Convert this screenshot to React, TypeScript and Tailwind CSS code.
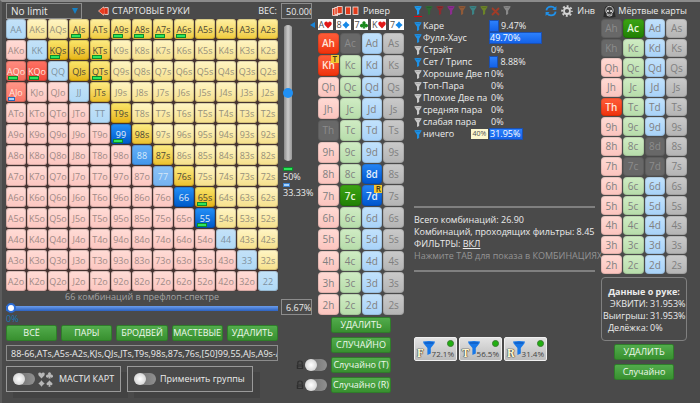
import { useState, type ReactNode } from 'react'
import clsx from 'clsx'

const RANKS = ['A', 'K', 'Q', 'J', 'T', '9', '8', '7', '6', '5', '4', '3', '2']
const SUITS = ['h', 'c', 'd', 's'] as const

type Suit = (typeof SUITS)[number]
type Tone = 'soft' | 'strong' | 'full'

const HAND_TONES: Record<string, Tone> = {
  AJs: 'soft', ATs: 'soft', A9s: 'soft', A8s: 'soft', A7s: 'soft', A6s: 'soft',
  A5s: 'soft', A4s: 'soft', A3s: 'soft', A2s: 'soft',
  KQs: 'full', KJs: 'full', KTs: 'strong', QJs: 'full', QTs: 'strong', JTs: 'strong',
  T9s: 'full', '98s': 'strong', '87s': 'strong', '76s': 'strong', '65s': 'full',
  '99': 'full', '88': 'strong', '77': 'soft', '66': 'full', '55': 'full',
  AQo: 'strong', KQo: 'full', AJo: 'soft',
}

const HALF_WEIGHT = ['AJs', 'A9s', 'A8s', 'A7s', 'A6s', 'KQs', 'KTs', 'QTs', '65s', '99', '55', 'AQo', 'KQo']
const THIRD_WEIGHT = ['AJo']

const SUITED_STYLES = {
  none: 'from-[#fff5c4] to-[#f6e08c] text-[#96907a]',
  soft: 'from-[#fff0a0] to-[#f0cb38] text-[#4c4836]',
  strong: 'from-[#fdec82] to-[#ecc028] text-[#4c4836]',
  full: 'from-[#fbe668] to-[#e6b40a] text-[#4c4836]',
}
const PAIR_STYLES = {
  none: 'from-[#c4e2f8] to-[#b0d9f6] text-[#7e92a0]',
  soft: 'from-[#8cc2f6] to-[#74b2f0] text-[#d6e8f8]',
  strong: 'from-[#66b0f6] to-[#4296ea] text-[#d8eafa]',
  full: 'from-[#2490f8] to-[#0058c8] text-[#e4f0fa]',
}
const OFFSUIT_STYLES = {
  none: 'from-[#ffdcd6] to-[#fcc6c0] text-[#9e8a86]',
  soft: 'from-[#ff9688] to-[#f87466] text-[#ffe4de]',
  strong: 'from-[#ff8c80] to-[#f4685a] text-[#ffe4de]',
  full: 'from-[#ff7264] to-[#f0483a] text-[#ffe4de]',
}

const CARD_STYLES: Record<Suit, { idle: string; picked: string }> = {
  h: { idle: 'from-[#ffdad4] to-[#fbc4be]', picked: 'from-[#ff5c38] to-[#ee3006] text-[#ffe6da]' },
  c: { idle: 'from-[#d0ecc4] to-[#b6dcaa]', picked: 'from-[#3ca414] to-[#208004] text-[#e6f6dc]' },
  d: { idle: 'from-[#c2e2fc] to-[#a8d2f8]', picked: 'from-[#2484f4] to-[#0054cc] text-[#e4f0fc]' },
  s: { idle: 'from-[#cacaca] to-[#b4b4b4]', picked: 'from-[#666] to-[#222] text-white' },
}

const SUIT_PATHS: Record<Suit, string> = {
  h: 'M5 9.4 L0.9 4.9 Q-0.3 2.6 1.2 1.2 Q3.4 -0.2 5 2.2 Q6.6 -0.2 8.8 1.2 Q10.3 2.6 9.1 4.9 Z',
  c: 'M5 0.4 A2.2 2.2 0 0 1 6.6 4 A2.2 2.2 0 1 1 5.7 6.6 L6.6 9.4 H3.4 L4.3 6.6 A2.2 2.2 0 1 1 3.4 4 A2.2 2.2 0 0 1 5 0.4 Z',
  d: 'M5 0.3 Q6.6 3.2 9.5 5 Q6.6 6.8 5 9.7 Q3.4 6.8 0.5 5 Q3.4 3.2 5 0.3 Z',
  s: 'M5 0.3 Q6 2 8.4 4 Q10.2 5.8 8.4 7.2 Q6.8 8.2 5.6 6.8 L6.6 9.6 H3.4 L4.4 6.8 Q3.2 8.2 1.6 7.2 Q-0.2 5.8 1.6 4 Q4 2 5 0.3 Z',
}

const FILTERS = [
  { name: 'Каре', value: 9.47, active: true },
  { name: 'Фулл-Хаус', value: 49.7, active: true },
  { name: 'Стрэйт', value: 0, active: false },
  { name: 'Сет / Трипс', value: 8.88, active: true },
  { name: 'Хорошие Две п', value: 0, active: false },
  { name: 'Топ-Пара', value: 0, active: false },
  { name: 'Плохие Две па', value: 0, active: false },
  { name: 'средняя пара', value: 0, active: false },
  { name: 'слабая пара', value: 0, active: false },
  { name: 'ничего', value: 31.95, active: true, note: '40%' },
]

const BOARD: { rank: string; suit: Suit; color: string }[] = [
  { rank: 'A', suit: 'h', color: 'text-[#e01818]' },
  { rank: '8', suit: 'd', color: 'text-[#1488e8]' },
  { rank: '7', suit: 'c', color: 'text-[#18881c]' },
  { rank: 'K', suit: 'h', color: 'text-[#e01818]' },
  { rank: '7', suit: 'd', color: 'text-[#1488e8]' },
]

function SuitIcon({ suit, className }: { suit: Suit; className?: string }) {
  return (
    <svg viewBox="0 0 10 10" className={clsx('shrink-0', className)} fill="currentColor" aria-hidden="true">
      <path d={SUIT_PATHS[suit]} />
    </svg>
  )
}

function Funnel({ className }: { className?: string }) {
  return (
    <svg viewBox="0 0 8 10" className={clsx('shrink-0', className)} fill="currentColor" aria-hidden="true">
      <path d="M0 0.4 Q4 -0.4 8 0.4 L7.6 1.8 L5.3 5.4 V9 L2.9 10 V5.4 L0.4 1.8 Z" />
      <path d="M1.2 1.1 H6.8 L6.3 1.9 H1.7 Z" fill="#000" opacity="0.18" />
    </svg>
  )
}

function GreenButton({ children, className }: { children: ReactNode; className?: string }) {
  return (
    <button
      className={clsx(
        'flex h-4 items-center justify-center whitespace-nowrap rounded-xs border border-[#2f7d2a] bg-linear-to-b from-[#52ac4c] to-[#38902f] text-[9px] font-medium text-[#eef8ec]',
        className,
      )}
    >
      {children}
    </button>
  )
}

function Toggle({ label }: { label: string }) {
  return (
    <input
      type="checkbox"
      role="switch"
      aria-label={label}
      className="h-3 w-[22px] shrink-0 appearance-none rounded-full bg-linear-to-r from-[#6a6a6a] to-[#909090] before:block before:size-3 before:rounded-full before:bg-radial before:from-white before:to-[#c8c8c8] checked:before:translate-x-2.5"
    />
  )
}

function HandMatrix() {
  return (
    <div className="grid grid-cols-13 gap-px bg-[#443230]">
      {RANKS.map((row, r) =>
        RANKS.map((col, c) => {
          const hand = r === c ? row + col : r < c ? `${row}${col}s` : `${col}${row}o`
          const styles = r === c ? PAIR_STYLES : r < c ? SUITED_STYLES : OFFSUIT_STYLES
          return (
            <button
              key={hand}
              className={clsx(
                'relative flex h-5 items-center justify-center rounded-[3px] bg-linear-to-b text-[9px] leading-none inset-ring inset-ring-black/15',
                styles[HAND_TONES[hand] ?? 'none'],
                HAND_TONES[hand] && 'font-medium',
              )}
            >
              {hand}
              {HALF_WEIGHT.includes(hand) && (
                <span className="absolute bottom-px left-0.5 h-1 w-2.5 border border-[#0e8a2c] bg-[#2ee65c]" />
              )}
              {THIRD_WEIGHT.includes(hand) && (
                <span className="absolute bottom-px left-0.5 h-1 w-[7px] border border-[#2868b8] bg-[#a8d4fc]" />
              )}
            </button>
          )
        }),
      )}
    </div>
  )
}

interface CardGridProps {
  picked: string[]
  disabled: string[]
  badges?: Record<string, string>
  className?: string
}

function CardGrid({ picked, disabled, badges = {}, className }: CardGridProps) {
  return (
    <div className={clsx('grid grid-cols-4 grid-rows-13 gap-px', className)}>
      {RANKS.map((rank) =>
        SUITS.map((suit) => {
          const card = rank + suit
          const isPicked = picked.includes(card)
          const isDisabled = disabled.includes(card)
          return (
            <button
              key={card}
              aria-pressed={isPicked}
              disabled={isDisabled}
              className={clsx(
                'relative flex items-center justify-center rounded-[4px] text-[10px] leading-none inset-ring inset-ring-black/10',
                isDisabled && 'bg-[#686868] text-[#8c8c8c]',
                !isDisabled && 'bg-linear-to-b',
                !isDisabled && (isPicked ? CARD_STYLES[suit].picked : CARD_STYLES[suit].idle),
                !isDisabled && (isPicked ? 'font-semibold' : 'text-[#808080]'),
              )}
            >
              {card}
              {badges[card] && (
                <span className="absolute top-0 right-0 flex size-2 items-center justify-center bg-[#f4c830] text-[8px] font-semibold text-[#40361a]">
                  {badges[card]}
                </span>
              )}
            </button>
          )
        }),
      )}
    </div>
  )
}

function RangePanel() {
  const [weight, setWeight] = useState(50)
  const [limit, setLimit] = useState(0)

  return (
    <section className="flex flex-col">
      <div className="flex h-4 items-center">
        <div className="relative flex">
          <select
            aria-label="No limit"
            className="h-4 w-[76px] appearance-none border border-[#8c8c8c] pl-1 text-[10px] leading-[14px]"
          >
            <option>No limit</option>
          </select>
          <svg viewBox="0 0 6 6" className="pointer-events-none absolute top-[5px] right-1 size-1.5" fill="#1780c4">
            <path d="M0 0 H6 L3 6 Z" />
          </svg>
        </div>
        <svg viewBox="0 0 11 10" className="ml-4 h-2.5 w-[11px]">
          <path d="M0.5 5 L5.5 0.8 V2 H7 V8 H5.5 V9.2 Z" fill="#e83c20" stroke="#ffd0c0" strokeWidth="0.7" />
          <path d="M6.6 1.6 H10.2 V8.4 H6.6" fill="#d83018" stroke="#f4f4f4" strokeWidth="0.8" />
        </svg>
        <h1 className="ml-[3px] text-[9px] whitespace-nowrap">СТАРТОВЫЕ РУКИ</h1>
        <label htmlFor="weight" className="mr-1 ml-auto text-[9px]">ВЕС:</label>
        <input
          id="weight"
          defaultValue="50.000"
          className="h-4 w-[31px] border border-[#8c8c8c] pl-1 text-[9px]"
        />
      </div>

      <div className="flex">
        <div className="flex min-w-0 flex-1 flex-col">
          <HandMatrix />
          <p className="h-3 text-center text-[9px] leading-3 text-[#a4a4a4]">66 комбинаций в префлоп-спектре</p>
          <input
            type="range"
            aria-label="Процент рук"
            value={limit}
            onChange={(e) => setLimit(Number(e.target.value))}
            className="h-2.5 appearance-none bg-[linear-gradient(#6a9cec,#2c62c0)] bg-size-[100%_5px] bg-center bg-no-repeat [&::-webkit-slider-thumb]:size-2.5 [&::-webkit-slider-thumb]:appearance-none [&::-webkit-slider-thumb]:rounded-full [&::-webkit-slider-thumb]:border-2 [&::-webkit-slider-thumb]:border-[#2c6cd4] [&::-webkit-slider-thumb]:bg-white"
          />
          <p className="text-[9px] leading-3 text-[#1878b4]">0%</p>
        </div>

        <div className="flex w-[34px] shrink-0 flex-col pl-[3px]">
          <input
            type="range"
            aria-label="Вес руки"
            value={weight}
            onChange={(e) => setWeight(Number(e.target.value))}
            className="mt-1.5 ml-0.5 h-[136px] w-2.5 appearance-none rounded-full bg-[linear-gradient(to_right,#8c8c8c,#cacaca,#989898)] bg-size-[8px_100%] bg-center bg-no-repeat [direction:rtl] [writing-mode:vertical-lr] [&::-webkit-slider-thumb]:size-2.5 [&::-webkit-slider-thumb]:appearance-none [&::-webkit-slider-thumb]:rounded-full [&::-webkit-slider-thumb]:bg-[#2090f4]"
          />
          <span className="mt-1.5 ml-0.5 h-1 w-2.5 border border-[#0e8a2c] bg-[#2ee65c]" />
          <span className="ml-0.5 h-3 text-[9px] leading-3">50%</span>
          <span className="ml-0.5 h-1 w-[7px] border border-[#3c80cc] bg-[#a8d4fc]" />
          <span className="ml-0.5 text-[9px] leading-3">33.33%</span>
          <input
            aria-label="Процент спектра"
            defaultValue="6.67%"
            className="mt-auto mb-2.5 h-4 w-[31px] border border-[#8c8c8c] pl-1 text-[9px]"
          />
        </div>
      </div>

      <div className="pr-[34px]">
        <div className="grid grid-cols-5 gap-1">
          {['ВСЁ', 'ПАРЫ', 'БРОДВЕЙ', 'МАСТЕВЫЕ', 'УДАЛИТЬ'].map((label) => (
            <GreenButton key={label}>{label}</GreenButton>
          ))}
        </div>
        <input
          aria-label="Спектр"
          defaultValue="88-66,ATs,A5s-A2s,KJs,QJs,JTs,T9s,98s,87s,76s,[50]99,55,AJs,A9s-A6s"
          className="mt-1 block h-4 w-full border border-[#8c8c8c] pl-1 text-[9px] font-medium"
        />
        <div className="mt-[5px] flex gap-1.5">
          <label className="flex h-[26px] w-[115px] items-center border border-[#9a9a9a] bg-[#4a4a4a] pl-1.5 shadow-[7px_6px_0_#434343]">
            <Toggle label="МАСТИ КАРТ" />
            <span className="ml-[3px] grid grid-cols-2 gap-px text-[#b8b8b8]">
              <SuitIcon suit="h" className="size-[7px]" />
              <SuitIcon suit="c" className="size-[7px]" />
              <SuitIcon suit="d" className="size-[7px]" />
              <SuitIcon suit="s" className="size-[7px]" />
            </span>
            <span className="ml-1.5 text-[9px] whitespace-nowrap">МАСТИ КАРТ</span>
          </label>
          <label className="flex h-[26px] w-[126px] items-center border border-[#9a9a9a] bg-[#4a4a4a] pl-1.5 shadow-[7px_6px_0_#434343]">
            <Toggle label="Применить группы" />
            <span className="ml-1 text-[9px] whitespace-nowrap">Применить группы</span>
          </label>
        </div>
      </div>
    </section>
  )
}

function Lock() {
  return (
    <svg viewBox="0 0 8 10" className="mr-px h-2.5 w-2" aria-hidden="true">
      <path d="M1.8 4.6 V3 Q1.8 1 4 1 Q6.2 1 6.2 3 V4.6" fill="none" stroke="#2e2e2e" strokeWidth="1.2" />
      <rect x="0.8" y="4.6" width="6.4" height="4.4" rx="0.6" fill="#2e2e2e" />
      <path d="M2.2 6 H5.8 M2.2 7.5 H5.8" stroke="#5a5a5a" strokeWidth="0.7" />
    </svg>
  )
}

function BoardPanel() {
  return (
    <section className="flex flex-col">
      <div className="flex h-4 items-center justify-center gap-1">
        <svg viewBox="0 0 27 10" className="h-2.5 w-[27px]" stroke="#f8e8e4" strokeWidth="0.8" fill="#e43c1c">
          <rect x="0.6" y="2.4" width="5" height="7" />
          <rect x="2.9" y="1.4" width="5" height="7" />
          <rect x="5.2" y="0.6" width="5" height="7" />
          <rect x="13.6" y="1" width="5" height="7.4" />
          <rect x="21" y="1" width="5" height="7.4" />
        </svg>
        <h2 className="text-[9px]">Ривер</h2>
      </div>
      <div className="relative flex gap-[3px]">
        <svg viewBox="0 0 5 6" className="absolute top-[3px] -left-2 h-1.5 w-[5px]" fill="#1884d8">
          <path d="M5 0 V6 L0 3 Z" />
        </svg>
        {BOARD.map(({ rank, suit, color }) => (
          <span
            key={rank + suit}
            className="flex h-[11px] flex-1 items-center justify-center bg-white text-[9px] leading-none text-[#505050]"
          >
            {rank}
            <SuitIcon suit={suit} className={clsx('size-2', color)} />
          </span>
        ))}
      </div>
      <CardGrid
        className="mt-[3px] h-[282px]"
        picked={['Ah', 'Kh', '8d', '7c', '7d']}
        disabled={['Ac', 'Th']}
        badges={{ Kh: 'T', '7d': 'R' }}
      />
      <div className="mt-0.5 flex flex-col gap-1 pr-[13px]">
        <GreenButton className="ml-[13px]">УДАЛИТЬ</GreenButton>
        <GreenButton className="ml-[13px]">СЛУЧАЙНО</GreenButton>
        {['Случайно (T)', 'Случайно (R)'].map((label) => (
          <div key={label} className="-ml-[22px] flex items-center">
            <Lock />
            <Toggle label={label} />
            <GreenButton className="ml-1 min-w-0 flex-1">{label}</GreenButton>
          </div>
        ))}
      </div>
    </section>
  )
}

const PALETTE = [
  'text-[#1e9cf0]', 'text-[#2f6a34]', 'text-[#8c2c30]', 'text-[#8c2c90]',
  'text-[#905a38]', 'text-[#3c8486]', 'text-[#6c8428]',
]

function FilterPanel() {
  return (
    <section className="flex flex-col pl-1">
      <div className="flex h-4 items-center justify-between">
        <div className="flex gap-[3px]">
          {PALETTE.map((color, i) => (
            <button
              key={color}
              aria-label={`Группа ${i + 1}`}
              className={clsx('h-3 border-b', i === 0 ? 'border-red-600' : 'border-transparent')}
            >
              <Funnel className={clsx('h-[9px] w-2', color)} />
            </button>
          ))}
          <button aria-label="Сбросить" className="h-3">
            <svg viewBox="0 0 9 9" className="size-[9px]" stroke="#a03c28" strokeWidth="1.8">
              <path d="M1 1 L8 8 M8 1 L1 8" />
            </svg>
          </button>
          <button aria-label="Без группы" className="h-3 border-b border-transparent">
            <Funnel className="h-[9px] w-2 text-[#8a8a8a]" />
          </button>
        </div>
        <div className="flex items-center gap-1">
          <button aria-label="Обновить">
            <svg viewBox="0 0 12 12" className="size-3" fill="none" stroke="#2090e8" strokeWidth="1.8">
              <path d="M1.4 5.4 Q2 1.6 6 1.6 Q8.4 1.6 9.8 3.4" />
              <path d="M10.6 6.6 Q10 10.4 6 10.4 Q3.6 10.4 2.2 8.6" />
              <path d="M11.4 1 V5 H7.4 Z M0.6 11 V7 H4.6 Z" fill="#2090e8" stroke="none" />
            </svg>
          </button>
          <button aria-label="Настройки">
            <svg viewBox="0 0 12 12" className="size-3" fill="none" stroke="#d4d4d4">
              <circle cx="6" cy="6" r="3" strokeWidth="1.8" />
              <circle cx="6" cy="6" r="4.9" strokeWidth="1.8" strokeDasharray="1.95 1.9" strokeDashoffset="0.97" />
            </svg>
          </button>
          <button className="text-[9px] font-medium">Инв</button>
        </div>
      </div>

      <ul className="mt-px text-[9px] leading-3">
        {FILTERS.map(({ name, value, active, note }) => (
          <li key={name} className="relative flex h-3 items-center">
            <Funnel className={clsx('h-[9px] w-2', active ? 'text-[#1e90e4]' : 'text-[#c8c8c8]')} />
            <span className="w-[67px] shrink-0 overflow-hidden pl-px whitespace-nowrap">{name}</span>
            {note && (
              <span className="absolute left-[57px] flex h-2.5 w-[17px] items-center justify-center bg-[#fdf8d0] text-[7px] text-[#505050]">
                {note}
              </span>
            )}
            <div className="flex min-w-0 flex-1 items-center">
              {value > 30 ? (
                <span
                  className="h-3 border border-[#1c50b0] bg-linear-to-b from-[#2c80fc] to-[#1462e8] leading-[10px] text-white"
                  style={{ width: `${value}%` }}
                >
                  {value.toFixed(2)}%
                </span>
              ) : (
                <>
                  <span
                    className={clsx('h-3 bg-linear-to-b from-[#2c80fc] to-[#1462e8]', value > 0 && 'border border-[#1c50b0]')}
                    style={{ width: `${value}%` }}
                  />
                  <span className="pl-0.5">{value ? value.toFixed(2) : 0}%</span>
                </>
              )}
            </div>
          </li>
        ))}
      </ul>

      <div className="mt-[66px] border-y-2 border-[#808080] pt-1.5 pb-2 text-[9px] leading-3 whitespace-nowrap">
        <p>Всего комбинаций: 26.90</p>
        <p>Комбинаций, проходящих фильтры: 8.45</p>
        <p>
          ФИЛЬТРЫ: <button className="underline">ВКЛ</button>
        </p>
        <p className="text-[#949494]">Нажмите ТАВ для показа в КОМБИНАЦИЯХ</p>
      </div>

      <div className="mt-[65px] flex gap-0.5">
        {[
          ['F', '72.1%'],
          ['T', '56.5%'],
          ['R', '31.4%'],
        ].map(([street, share]) => (
          <button
            key={street}
            className="relative flex h-6 w-[43px] items-end rounded-xs border border-[#f0f0f0] bg-linear-to-b from-[#e2e2e2] to-[#bcbcbc] pl-0.5 text-[#444]"
          >
            <span className="font-serif text-[12px] leading-[14px] font-bold text-[#fff8d0] [text-shadow:0_0_1px_#333,0_0_1px_#333,0_0_1px_#333]">
              {street}
            </span>
            <svg viewBox="0 0 12 14" className="absolute top-[3px] left-2 h-3.5 w-3" fill="#1878e8">
              <path d="M0 0.6 Q6 -0.4 12 0.6 L11.4 2.4 L7.8 7 V12.4 L4.4 14 V7 L0.6 2.4 Z" />
              <path d="M1.6 1.4 H10.4 L9.8 2.4 H2.2 Z" fill="#0c50b0" />
            </svg>
            <span className="absolute top-0.5 right-0.5 size-[7px] rounded-full border border-[#3c7c34] bg-[#20b010]" />
            <span className="absolute right-0.5 bottom-0.5 text-[8px] leading-[9px]">{share}</span>
          </button>
        ))}
      </div>
    </section>
  )
}

function DeadCardsPanel() {
  return (
    <section className="flex flex-col">
      <div className="flex h-4 items-center justify-between">
        <svg viewBox="0 0 13 13" className="ml-0.5 size-[13px]">
          <path d="M6.5 0.4 Q12 0.6 11.6 6 L12.6 12 Q6.5 13.6 0.4 12 L1.4 6 Q1 0.6 6.5 0.4 Z" fill="#2a2a2a" />
          <path d="M6.5 1.4 Q10.4 1.6 10.2 5.8 L9.4 8 L8.8 8.4 V10.4 Q6.5 11.6 4.2 10.4 V8.4 L3.6 8 L2.8 5.8 Q2.6 1.6 6.5 1.4 Z" fill="#3c3c3c" stroke="#d8d8d8" strokeWidth="0.9" />
          <circle cx="4.9" cy="6" r="1.1" fill="#e4e4e4" />
          <circle cx="8.1" cy="6" r="1.1" fill="#e4e4e4" />
          <path d="M5 9.4 H8" stroke="#d0d0d0" strokeWidth="0.9" strokeDasharray="0.8 0.4" />
        </svg>
        <h2 className="text-[9px] font-medium whitespace-nowrap">Мёртвые карты</h2>
      </div>
      <CardGrid
        className="h-[255px]"
        picked={['Ac', 'Th']}
        disabled={['Ah', 'Kh', '8d', '7c', '7d']}
      />
      <div className="mt-[3px] rounded-sm border border-[#808080] pt-2 pb-1.5 text-[9px] leading-3 whitespace-nowrap">
        <h3 className="text-center font-bold">Данные о руке:</h3>
        <dl className="grid grid-cols-[46px_1fr] gap-x-0.5">
          <dt className="text-right">ЭКВИТИ:</dt>
          <dd>31.953%</dd>
          <dt className="text-right">Выигрыш:</dt>
          <dd>31.953%</dd>
          <dt className="text-right">Делёжка:</dt>
          <dd>0%</dd>
        </dl>
      </div>
      <div className="mt-[3px] flex flex-col gap-1 px-[13px]">
        <GreenButton>УДАЛИТЬ</GreenButton>
        <GreenButton>Случайно</GreenButton>
      </div>
    </section>
  )
}

export default function App() {
  return (
    <main className="min-h-screen border-t-2 border-l-2 border-t-[#8c8c8c] border-l-[#5c5c5c] bg-[#4a4a4a] pt-px pr-[13px] pl-1 font-['Open_Sans','Noto_Sans',sans-serif] text-[#ececec]">
      <div className="grid grid-cols-[306fr_86fr_185fr_86fr] gap-1.5 *:min-w-0">
        <RangePanel />
        <BoardPanel />
        <FilterPanel />
        <DeadCardsPanel />
      </div>
    </main>
  )
}
